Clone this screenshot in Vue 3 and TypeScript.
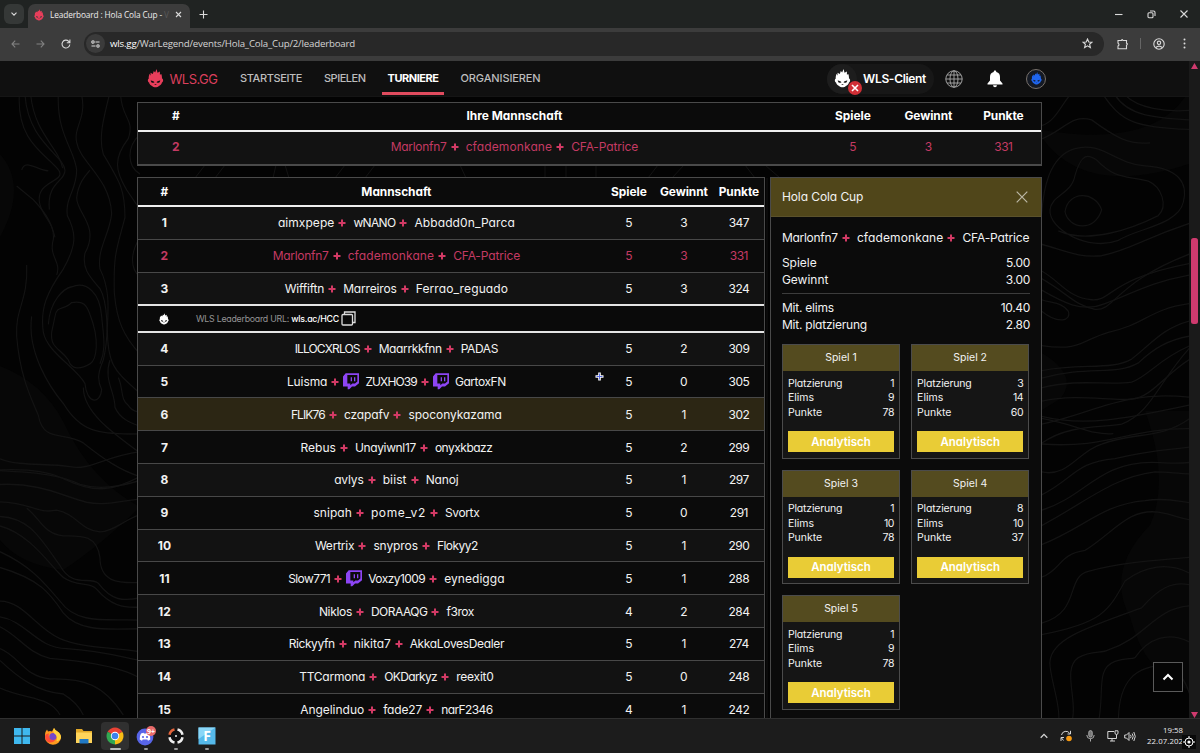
<script setup lang="ts">
import type { Directive } from 'vue'

interface Member { name: string; w: number; twitch?: boolean }
interface Row { rank: number; team: Member[]; games: number; wins: number; points: number; kind?: string }

// Tracks a label out (or in) so that it fills the given width.
const vFit: Directive<HTMLElement, number> = {
  mounted(el, { value }) {
    const natural = el.getBoundingClientRect().width
    const count = (el.textContent ?? '').trim().length
    if (count > 0) el.style.letterSpacing = `${(value - natural) / count}px`
  },
}

const m = (name: string, w: number, twitch = false): Member => ({ name, w, twitch })
const own: Member[] = [m('Marlonfn7', 56), m('cfademonkane', 86.5), m('CFA-Patrice', 67)]

const top: Row[] = [
  { rank: 1, team: [m('aimxpepe', 56.5), m('wNANO', 42), m('Abbadd0n_Parca', 100.5)], games: 5, wins: 3, points: 347, kind: 'light' },
  { rank: 2, team: own, games: 5, wins: 3, points: 331, kind: 'own' },
  { rank: 3, team: [m('Wiffiftn', 39.5), m('Marreiros', 53.5), m('Ferrao_reguado', 92.5)], games: 5, wins: 3, points: 324, kind: 'light' },
]
const rest: Row[] = [
  { rank: 4, team: [m('ILLOCXRLOS', 65), m('Maarrkkfnn', 63), m('PADAS', 37.5)], games: 5, wins: 2, points: 309, kind: 'light' },
  { rank: 5, team: [m('Luisma', 40.5), m('ZUXHO39', 51.5, true), m('GartoxFN', 51, true)], games: 5, wins: 0, points: 305 },
  { rank: 6, team: [m('FLIK76', 34), m('czapafv', 45.5), m('spoconykazama', 93.5)], games: 5, wins: 1, points: 302, kind: 'picked' },
  { rank: 7, team: [m('Rebus', 35.5), m('Unayiwnl17', 61), m('onyxkbazz', 57.5)], games: 5, wins: 2, points: 299 },
  { rank: 8, team: [m('avlys', 29.5), m('biist', 24), m('Nanoj', 33)], games: 5, wins: 1, points: 297, kind: 'light' },
  { rank: 9, team: [m('snipah', 38.5), m('pome_v2', 55), m('Svortx', 34.5)], games: 5, wins: 0, points: 291 },
  { rank: 10, team: [m('Wertrix', 39.5), m('snypros', 44.5), m('Flokyy2', 41)], games: 5, wins: 1, points: 290, kind: 'light' },
  { rank: 11, team: [m('Slow771', 42), m('Voxzy1009', 57, true), m('eynedigga', 60.5)], games: 5, wins: 1, points: 288 },
  { rank: 12, team: [m('Niklos', 33), m('DORAAQG', 56.5), m('f3rox', 27.5)], games: 4, wins: 2, points: 284, kind: 'light' },
  { rank: 13, team: [m('Rickyyfn', 46), m('nikita7', 37), m('AkkaLovesDealer', 94.5)], games: 5, wins: 1, points: 274 },
  { rank: 14, team: [m('TTCarmona', 66), m('OKDarkyz', 53), m('reexit0', 37.5)], games: 5, wins: 0, points: 248, kind: 'light' },
  { rank: 15, team: [m('Angelinduo', 64), m('fade27', 39), m('narF2346', 51.5)], games: 4, wins: 1, points: 242 },
]
const rounds = [
  { n: 1, place: 1, elims: 9, points: 78 },
  { n: 2, place: 3, elims: 14, points: 60 },
  { n: 3, place: 1, elims: 10, points: 78 },
  { n: 4, place: 8, elims: 10, points: 37 },
  { n: 5, place: 1, elims: 9, points: 78 },
]
const groups = [top, rest]

const leftLines = [
  'M58 0C50 120 140 150 176 190C200 220 110 215 118 270C125 310 165 320 160 365C145 410 185 420 170 455',
  'M75 0C85 120 190 150 195 190C195 220 140 220 148 290',
  'M92 0C105 100 175 130 188 185',
  'M175 0C170 100 225 140 230 190C230 240 195 260 202 305C230 350 230 380 190 440C140 500 120 540 130 600C140 650 230 690 255 730C260 780 300 785 305 745C290 720 295 700 310 670C330 600 320 520 300 490C270 460 245 440 255 400C300 330 230 300 230 260C235 220 260 200 270 190',
  'M245 0C260 60 220 80 230 120C240 170 330 210 335 300C330 350 290 390 300 440C330 490 325 540 322 590C322 690 350 700 420 755',
  'M328 0C310 60 295 110 310 150C360 220 375 240 375 310C350 390 340 400 343 500C350 570 370 610 420 655',
  'M362 0C365 60 405 60 385 110C340 160 345 190 380 240L420 290',
  'M165 560C170 530 195 545 215 525C250 520 260 530 270 555C300 620 290 670 270 680C240 695 215 695 205 670C180 640 150 640 155 600Z',
  'M145 580C150 520 190 490 215 485C260 470 300 500 305 560C310 610 320 640 300 680',
  'M95 560C80 650 150 740 190 780C240 850 290 860 420 857',
  'M250 740C250 800 330 850 420 905M330 670C310 720 345 750 345 790C360 820 395 830 420 838',
  'M80 430C85 520 45 540 50 610C60 710 90 760 115 810C130 880 190 850 250 880C310 920 360 950 420 965',
  'M50 230L100 265C150 310 155 330 165 360M65 190C75 160 110 190 145 192',
  'M0 920C60 940 140 930 210 940C270 950 310 915 420 902',
  'M0 948C80 945 140 950 190 970C290 1010 340 1000 420 965',
  'M0 985C120 980 190 1015 260 1030C320 1040 370 1025 420 1022',
  'M0 950C110 955 180 960 240 985C300 1000 360 990 420 975',
  'M0 1029C90 1030 110 1060 170 1050C230 1060 240 1100 300 1105C340 1105 380 1070 420 1062',
  'M0 1066C90 1070 120 1120 180 1190C220 1250 270 1215 295 1235C335 1280 370 1280 420 1272',
  'M0 1090C90 1110 150 1190 190 1220C230 1245 270 1230 290 1250C330 1290 370 1298 420 1295',
  'M80 1045C120 1070 130 1110 190 1115C240 1115 290 1110 300 1170C300 1230 350 1235 420 1233',
  'M0 1155C90 1190 130 1230 180 1280C230 1340 320 1325 420 1328',
  'M0 1195C120 1225 150 1260 190 1310C240 1360 330 1350 420 1350',
  'M0 1280C70 1280 110 1350 180 1375C250 1400 330 1395 420 1408',
  'M0 1345C60 1370 80 1410 150 1425C220 1430 350 1440 420 1475',
  'M0 1400C60 1420 70 1470 150 1477C250 1475 310 1490 370 1568',
  'M0 1320C80 1330 110 1400 200 1400C300 1405 360 1420 420 1430',
  'M0 1430C50 1470 110 1510 190 1515C220 1530 240 1550 250 1568M0 1500C80 1530 150 1520 180 1568',
  'M420 100C380 130 380 180 420 200M420 360C390 400 390 440 420 460M355 715C370 740 360 770 385 785C395 800 410 800 420 803',
]
const rightLines = [
  'M20 80C60 70 80 25 105 0M20 115C90 90 110 50 170 65C240 110 280 130 345 125',
  'M205 0C260 70 300 85 465 90M270 0C310 35 390 45 465 40M240 0C280 55 360 60 465 65',
  'M20 310C25 250 40 160 120 140C200 120 240 180 330 185C430 190 460 230 445 280C430 340 300 350 250 380C160 410 40 350 45 300C50 260 110 260 120 210C140 150 160 155 185 170C240 220 270 210 340 225C380 240 400 290 370 315C290 350 160 390 70 355',
  'M90 305C100 250 180 250 200 300C180 360 100 350 90 305Z',
  'M20 390C100 410 130 425 200 420C300 400 310 380 465 335',
  'M20 460C80 490 100 530 170 535C230 540 220 480 465 440',
  'M20 480C100 520 120 550 180 560C240 565 240 490 465 415',
  'M20 510C80 540 140 570 210 545C290 520 340 490 465 470',
  'M20 565C70 600 110 590 100 565C80 540 50 545 20 535',
  'M20 655C140 670 140 640 220 620C330 600 340 560 465 545',
  'M20 720C140 700 230 720 290 690C350 650 380 610 465 590',
  'M20 740C160 705 240 735 310 700C360 660 400 640 465 630',
  'M20 765C130 740 220 760 290 750C340 735 370 690 465 655',
  'M20 800C130 780 220 800 290 795C350 790 390 730 465 690',
  'M20 910C100 860 200 870 260 860C350 830 370 750 465 660',
  'M20 845C120 860 170 890 235 885M20 860C180 830 270 770 465 790',
  'M20 912C220 925 280 870 465 872M20 840C160 870 300 840 465 810',
  'M20 985C100 1000 130 930 200 912C300 880 380 900 465 845',
  'M20 1045C120 1000 120 960 240 950C340 930 370 930 465 920',
  'M20 1085C150 1050 190 960 350 960C390 960 420 965 465 960',
  'M20 1125C160 1060 230 1000 360 985C400 985 430 990 465 990',
  'M20 1175C150 1130 200 1070 330 1060C400 1050 440 1065 465 1065',
  'M20 1260C80 1240 70 1200 150 1190C240 1140 280 1080 370 1090C410 1095 430 1105 465 1110',
  'M20 1380C140 1350 90 1260 160 1245C260 1220 380 1215 465 1208',
  'M20 1410C200 1380 220 1350 270 1270C330 1230 400 1220 465 1250',
  'M70 1640C80 1600 40 1510 45 1480C50 1420 160 1390 320 1340C370 1290 410 1270 465 1280',
  'M110 1640C130 1580 80 1500 130 1470C170 1450 200 1460 220 1450C330 1420 360 1340 465 1335',
  'M190 1640C210 1560 180 1500 240 1480C270 1470 290 1475 300 1470C340 1420 400 1400 465 1430',
  'M250 1640C250 1530 300 1490 400 1490C440 1510 455 1540 465 1568',
]
</script>

<template>
  <div class="screen">
    <svg class="defs" width="0" height="0" aria-hidden="true">
      <symbol id="mascot" viewBox="0 0 24 28">
        <path fill-rule="evenodd" d="M5 10 4.600 5.500 8 7.500 9.500 3 11.500 5 13.500 0 15 5.500 18.500 3.500 18.500 8.500 20.500 7.500C22 11 21 12.500 22 14.500 24 15 23.500 19.500 21.500 20 21 22.500 19 24.500 16.500 25.500 15 27.500 9 27.500 7.500 25.500 5 24.500 3 22.500 2.500 20 .5 19.500 0 15 2 14.500 2 12 2 9 3.500 7ZM5 16.500C5 20 8 21.500 10.500 19.500 9.500 17.500 7 17.500 5 16.500ZM19 16.500C17 17.500 14.500 17.500 13.500 19.500 16 21.500 19 20 19 16.500ZM11 22.500 10.500 23.500H13.500L13 22.500Z" />
      </symbol>
      <symbol id="twitch" viewBox="0 0 24 24">
        <path fill="#8d45f5" d="M4 0H24V15L18 20H13.500L9 24.500H7V20H0V5ZM6.500 2.500V15.500H11V18L14 15.500H18L21.500 12.500V2.500ZM11.500 6H13.500V12H11.500ZM16.500 6H18.500V12H16.500Z" fill-rule="evenodd" />
      </symbol>
    </svg>

    <div class="tabs">
      <div class="tabmenu"><svg width="8" height="8" viewBox="0 0 8 8"><path d="M1.500 2.700 4 5.200 6.500 2.700" /></svg></div>
      <div class="tab">
        <svg class="pink" width="10" height="12"><use href="#mascot" /></svg>
        <span class="title"><span v-fit="112">Leaderboard : Hola Cola Cup -</span><i>V</i></span>
        <svg width="7" height="7" viewBox="0 0 7 7"><path d="M1 1 6 6M6 1 1 6" /></svg>
      </div>
      <svg class="plusbtn" width="9" height="9" viewBox="0 0 9 9"><path d="M4.500 .5V8.500M.5 4.500H8.500" /></svg>
      <div class="winbtns">
        <svg width="8" height="8" viewBox="0 0 8 8"><path d="M0 4.500H7.500" /></svg>
        <svg width="9" height="9" viewBox="0 0 9 9"><rect x="1" y="2.700" width="5" height="5" rx="1" /><path d="M3 1H6.500Q8 1 8 2.500V6" /></svg>
        <svg width="8" height="8" viewBox="0 0 8 8"><path d="M.5 .5 7.500 7.500M7.500 .5 .5 7.500" /></svg>
      </div>
    </div>

    <div class="toolbar">
      <svg class="dim" width="9" height="8" viewBox="0 0 9 8"><path d="M8.500 4H1M4.200 .7 1 4 4.200 7.300" /></svg>
      <svg class="dim" width="9" height="8" viewBox="0 0 9 8"><path d="M.5 4H8M4.800 .7 8 4 4.800 7.300" /></svg>
      <svg width="10" height="10" viewBox="0 0 10 10"><path d="M8.800 5.500A3.900 3.900 0 1 1 7.700 2.300L8.800 3.500M8.900 .6V3.700H5.800" /></svg>
      <div class="address">
        <div class="site"><svg width="9" height="8" viewBox="0 0 9 8"><circle cx="2" cy="2" r="1.200" /><path d="M4.500 2H8.500M.5 6H4.500" /><circle cx="7" cy="6" r="1.200" /></svg></div>
        <span v-fit="245"><b>wls.gg</b>/WarLegend/events/Hola_Cola_Cup/2/leaderboard</span>
        <svg class="star" width="11" height="11" viewBox="0 0 11 11"><path d="M5.500 1 6.800 4 10 4.200 7.600 6.300 8.400 9.600 5.500 7.800 2.600 9.600 3.400 6.300 1 4.200 4.200 4Z" /></svg>
      </div>
      <svg class="ext" width="12" height="12" viewBox="0 0 12 12"><path d="M1 2.500H4.500Q5 .8 6 2.500H9.500V5.200Q11.300 6 9.500 7.200V10.800H1V8Q3 7 1 5.200Z" /></svg>
      <i class="sep"></i>
      <svg width="12" height="12" viewBox="0 0 12 12"><circle cx="6" cy="6" r="5.200" /><circle cx="6" cy="4.800" r="1.700" /><path d="M2.800 9.500Q6 6.800 9.200 9.500" /></svg>
      <svg class="dots" width="3" height="11" viewBox="0 0 3 11"><circle cx="1.500" cy="1.500" r="1" /><circle cx="1.500" cy="5.500" r="1" /><circle cx="1.500" cy="9.500" r="1" /></svg>
    </div>

    <div class="page">
      <svg class="topo" width="1189" height="657" viewBox="0 61 1189 657">
        <path class="patch" d="M0 154Q28 186 0 237ZM0 366Q42 382 63 421Q90 480 140 507Q100 546 63 570Q20 565 0 540ZM1042 138Q1085 198 1189 164V97H1185Q1150 148 1042 130ZM1145 411Q1170 480 1150 525Q1105 571 1130 617Q1145 675 1189 690V411ZM1042 353Q1080 376 1060 399L1042 410Z" />
        <g transform="translate(0 95) scale(.3333 .3954)"><path v-for="d in leftLines" :key="d" :d="d" /></g>
        <g transform="translate(1035 95) scale(.3333 .3827)"><path v-for="d in rightLines" :key="d" :d="d" /></g>
        <path class="thin" d="M195 178 205 165M215 178 225 165M273 178 276 165M285 165 289 178M335 178 345 165M365 178 375 165M460 165 466 178M545 165V178M566 165V178M596 165V178M648 178 658 165M672 178 684 165M745 165 755 178M765 165 780 178M767 178V718" />
      </svg>

      <header>
        <svg class="pink brandmark" width="17" height="19"><use href="#mascot" /></svg>
        <span class="brand"><span v-fit="48">WLS.GG</span></span>
        <nav>
          <a class="n1"><span v-fit="62">STARTSEITE</span></a>
          <a class="n2"><span v-fit="41.5">SPIELEN</span></a>
          <a class="n3 active"><span v-fit="51">TURNIERE</span></a>
          <a class="n4"><span v-fit="80">ORGANISIEREN</span></a>
        </nav>
        <div class="client">
          <div class="face"><svg width="17" height="19"><use href="#mascot" /></svg>
            <svg class="badge" width="14" height="14" viewBox="0 0 14 14"><circle cx="7" cy="7" r="7" /><path d="M4 4 10 10M10 4 4 10" /></svg></div>
          <span v-fit="63">WLS-Client</span>
        </div>
        <svg class="globe" width="18" height="18" viewBox="0 0 18 18"><circle cx="9" cy="9" r="8.200" /><ellipse cx="9" cy="9" rx="4" ry="8.200" /><path d="M9 .8V17.200M.8 9H17.200M2 5H16M2 13H16" /></svg>
        <svg class="bell" width="16" height="18" viewBox="0 0 16 18"><path d="M8 .5C9 .5 9.300 1.200 9.300 2 12 2.600 13 4.700 13 7V10.500L15.500 13.500V14.500H.5V13.500L3 10.500V7C3 4.700 4 2.600 6.700 2 6.700 1.200 7 .5 8 .5ZM6 15.300H10Q9.800 17.300 8 17.300 6.200 17.300 6 15.300Z" /></svg>
        <div class="avatar"><svg width="11" height="13"><use href="#mascot" /></svg></div>
      </header>

      <main>
        <section class="mine">
          <div class="line head"><span>#</span><span v-fit="95">Ihre Mannschaft</span><span>Spiele</span><span>Gewinnt</span><span>Punkte</span></div>
          <div class="line light own">
            <b>2</b>
            <div class="team"><template v-for="(p, i) in own" :key="p.name"><svg v-if="i" class="plus" width="8" height="8" viewBox="0 0 8 8"><path d="M4 .5V7.500M.5 4H7.500" /></svg><span v-fit="p.w">{{ p.name }}</span></template></div>
            <span>5</span><span>3</span><span class="num">331</span>
          </div>
        </section>

        <div class="columns">
          <section class="board">
            <div class="line head"><span>#</span><span>Mannschaft</span><span>Spiele</span><span>Gewinnt</span><span>Punkte</span></div>
            <template v-for="(g, gi) in groups" :key="gi">
              <div v-if="gi" class="urlrow"><svg width="10" height="12"><use href="#mascot" /></svg><span v-fit="143" class="url">WLS Leaderboard URL: <b>wls.ac/HCC</b></span><svg class="copy" width="15" height="15" viewBox="0 0 15 15"><rect x="1" y="3.500" width="10.500" height="10.500" rx="1" /><path d="M3.500 3.500V1H14V11.500H11.500" /></svg></div>
              <div v-for="r in g" :key="r.rank" class="line" :class="r.kind">
                <b>{{ r.rank }}</b>
                <div class="team">
                  <template v-for="(p, i) in r.team" :key="p.name"><svg v-if="i" class="plus" width="8" height="8" viewBox="0 0 8 8"><path d="M4 .5V7.500M.5 4H7.500" /></svg><svg v-if="p.twitch" class="tw" width="16" height="16.500"><use href="#twitch" /></svg><span v-fit="p.w">{{ p.name }}</span></template>
                </div>
                <span>{{ r.games }}</span><span>{{ r.wins }}</span><span class="num">{{ r.points }}</span>
              </div>
            </template>
          </section>

          <aside>
            <div class="panelhead"><span v-fit="81.5">Hola Cola Cup</span><svg width="12" height="12" viewBox="0 0 12 12"><path d="M.7 .7 11.300 11.300M11.300 .7 .7 11.300" /></svg></div>
            <div class="panel">
              <div class="team"><template v-for="(p, i) in own" :key="p.name"><svg v-if="i" class="plus" width="8" height="8" viewBox="0 0 8 8"><path d="M4 .5V7.500M.5 4H7.500" /></svg><span v-fit="p.w">{{ p.name }}</span></template></div>
              <dl><dt>Spiele</dt><dd>5.00</dd><dt>Gewinnt</dt><dd>3.00</dd></dl>
              <dl class="avg"><dt><span v-fit="52">Mit. elims</span></dt><dd>10.40</dd><dt><span v-fit="85">Mit. platzierung</span></dt><dd>2.80</dd></dl>
              <div class="cards">
                <article v-for="c in rounds" :key="c.n">
                  <h3>Spiel {{ c.n }}</h3>
                  <dl><dt><span v-fit="54.5">Platzierung</span></dt><dd>{{ c.place }}</dd><dt>Elims</dt><dd>{{ c.elims }}</dd><dt>Punkte</dt><dd>{{ c.points }}</dd></dl>
                  <button><span v-fit="59.5">Analytisch</span></button>
                </article>
              </div>
            </div>
          </aside>
        </div>
      </main>

      <button class="totop"><svg width="12" height="8" viewBox="0 0 12 8"><path d="M1.500 6.500 6 2 10.500 6.500" /></svg></button>
      <svg class="scroll" width="11" height="657" viewBox="0 61 11 657"><path class="track" d="M0 61H11V718H0Z" /><path d="M2 69 5.500 63 9 69ZM2 712H9L5.500 718Z" /><rect x="2" y="238" width="7" height="86" rx="2.500" /></svg>
      <svg class="cursor" width="9" height="9" viewBox="0 0 9 9"><path d="M4.500 .5V8.500M.5 4.500H8.500" stroke="#fff" stroke-width="2.600" /><path d="M4.500 1.500V7.500M1.500 4.500H7.500" stroke="#4b5fe0" stroke-width=".9" /></svg>
    </div>

    <footer>
      <div class="apps">
        <div><svg width="18" height="18" viewBox="0 0 18 18"><path fill="#3fb8ef" d="M1 1H8.500V8.500H1ZM9.500 1H17V8.500H9.500ZM1 9.500H8.500V17H1ZM9.500 9.500H17V17H9.500Z" /></svg></div>
        <div><svg width="18" height="18" viewBox="0 0 18 18"><path fill="#ff9a1f" d="M1.500 5 3 2.500 4 4.500Q6 3.500 8 4.500L10 1Q11 3 13.500 4.500 17 7 17 10.500A8 7.500 0 0 1 1 10Q.8 7 1.500 5Z" /><path fill="#ff4b37" d="M1 9Q2 6 5 6.500 4 8 5 10 7 13 12 12.500 8 17 4 15 1 13 1 9Z" /><circle cx="9" cy="9.500" r="3.600" fill="#7548ca" /><path fill="#ffd33d" d="M10 1Q11 3 13.500 4.500 17.300 7 17 11 15 15 12.500 14 14 10 11 7 8 5 10 1Z" /></svg></div>
        <div><svg width="18" height="18" viewBox="0 0 18 18"><path fill="#e3a928" d="M1 2H7L8.500 4H17V8H1Z" /><path fill="#ffd45a" d="M1 5.500H17V16H1Z" /><path fill="#2179c4" d="M4.500 12H13.500V16.500H4.500Z" /></svg></div>
        <div class="on"><svg width="18" height="18" viewBox="0 0 18 18"><path fill="#e94235" d="M9 9 1.640 4.750A8.500 8.500 0 0 1 16.360 4.750Z" /><path fill="#f9bd15" d="M9 9 16.360 4.750A8.500 8.500 0 0 1 9 17.500Z" /><path fill="#32a852" d="M9 9V17.500A8.500 8.500 0 0 1 1.640 4.750Z" /><circle cx="9" cy="9" r="4.200" fill="#fff" /><circle cx="9" cy="9" r="3.300" fill="#3b82ee" /></svg><i class="wide"></i></div>
        <div><svg width="20" height="20" viewBox="0 0 20 20"><circle cx="9" cy="11" r="8.400" fill="#5865e8" /><path fill="#fff" d="M5 7.500 7.500 6.800 8 7.500H10L10.500 6.800 13 7.500Q14.500 10 14.300 13.500L12 14.700 11.300 13.600H6.700L6 14.700 3.700 13.500Q3.500 10 5 7.500Z" /><circle cx="7" cy="11" r="1.100" fill="#5865e8" /><circle cx="11" cy="11" r="1.100" fill="#5865e8" /><circle cx="15" cy="5" r="5" fill="#e86a6a" /><text x="15" y="7.500" text-anchor="middle" font-size="7" font-weight="700" fill="#fff">9+</text></svg><i></i></div>
        <div><svg width="18" height="18" viewBox="0 0 18 18"><circle cx="9" cy="9" r="7.500" fill="#111" /><g fill="none" stroke="#eee" stroke-width="2.500"><path d="M10.500 2.500A6.500 6.500 0 0 1 15.500 7.800M15.500 10.200A6.500 6.500 0 0 1 10.500 15.500M7.500 15.500A6.500 6.500 0 0 1 2.500 10.200" /><path stroke="#e2643b" d="M2.500 7.800A6.500 6.500 0 0 1 7.500 2.500" /></g><circle cx="9" cy="9" r="1" fill="#eee" /></svg><i></i></div>
        <div><svg width="18" height="18" viewBox="0 0 18 18"><path fill="#55b9ea" d="M.5 .5H17.500V17.500H.5Z" /><path fill="#8ad6f7" d="M.5 .5H17.500L.5 12Z" /><text x="9" y="14" text-anchor="middle" font-size="14" font-weight="700" fill="#fff">F</text></svg><i></i></div>
      </div>
      <div class="tray">
        <svg width="8" height="8" viewBox="0 0 8 8"><path d="M.7 5.700 4 2.400 7.300 5.700" stroke-width="1.300" /></svg>
        <svg class="t2" width="13" height="12" viewBox="0 0 13 12"><path d="M1.500 5A4.500 4.500 0 0 1 9.800 3.500M10.500 .8V4H7.500M1 11V7.500H4M1.500 8 3.500 10.500" /><circle cx="9" cy="8.500" r="2.800" fill="#f89a10" stroke="none" /></svg>
        <svg class="t3" width="9" height="12" viewBox="0 0 9 12"><rect x="2.800" y=".6" width="3.400" height="6.500" rx="1.700" fill="#777" /><path d="M.8 5Q.8 8.700 4.500 8.700 8.200 8.700 8.200 5M4.500 8.700V11.500" /></svg>
        <svg class="t4" width="12" height="12" viewBox="0 0 12 12"><path d="M7 1.500H.8V8.500H9.500V6M3 11H8M5 8.500V11M8 .8V3Q8 4.500 9.500 4.500 11 4.500 11 3V.8ZM9.500 4.500V7" /></svg>
        <svg class="t5" width="12" height="11" viewBox="0 0 12 11"><path d="M.7 4H2.500L5 1.500V9.500L2.500 7H.7ZM6.500 3.800Q7.700 5.500 6.500 7.200M8.200 2.500Q10.200 5.500 8.200 8.500M9.800 1Q12.700 5.500 9.800 10" /></svg>
        <div class="clock"><span v-fit="20">19:58</span><span v-fit="36">22.07.202</span></div>
        <svg class="rec" width="14" height="14" viewBox="0 0 14 14"><circle cx="7" cy="7" r="4" /><circle cx="7" cy="7" r="1.600" fill="#fff" stroke="none" /><path d="M7 1V3M7 11V13M1 7H3M11 7H13" /></svg>
      </div>
    </footer>
  </div>
</template>

<style>
body { background: #030303; overflow: hidden; }
</style>

<style scoped>
.screen { width: 1200px; height: 753px; overflow: hidden; display: flex; flex-direction: column; color: #f2f2f2; font-family: Inter, "Noto Sans", sans-serif; font-size: 12px; font-feature-settings: "cv11", "ss03"; }
.screen * { box-sizing: border-box; }
.defs { position: absolute; }
svg { display: block; flex: none; }
span { white-space: nowrap; }
.pink { fill: #e83e5b; }

.tabs { height: 28px; flex: none; background: #202322; display: flex; align-items: flex-start; padding: 4px 0 0 4px; font-family: "Open Sans", sans-serif; }
.tabs svg:not(.pink), .toolbar svg { fill: none; stroke: #dadada; stroke-width: 1.1; }
.tabmenu { width: 20px; height: 20px; border-radius: 6px; background: #353837; display: grid; place-items: center; }
.tab { margin-left: 4px; width: 162px; height: 24px; border-radius: 7px 7px 0 0; background: #3c3c3c; display: flex; align-items: center; padding: 0 8px 3px 6px; }
.title { flex: 1; margin-left: 6px; font-size: 8.300px; color: #ececec; line-height: 20px; }
.title i { color: #585858; font-style: normal; margin-left: 2px; }
.plusbtn { margin: 6px 0 0 9px; }
.winbtns { margin-left: auto; display: flex; align-items: center; gap: 24px; height: 20px; padding-right: 12px; }

.toolbar { height: 33px; flex: none; background: #3c3c3c; display: flex; align-items: center; padding: 0 14px 2px 11px; font-family: "Open Sans", sans-serif; }
.toolbar svg.dim { stroke: #818181; margin-right: 16px; }
.address { margin: 0 13px 0 13px; width: 220px; flex: 1; height: 24px; border-radius: 12px; background: #282828; display: flex; align-items: center; font-size: 9.700px; color: #d4d4d4; }
.address b { font-weight: 400; color: #fff; }
.site { width: 19px; height: 19px; border-radius: 50%; background: #3b3b3b; margin: 0 5px 0 2px; display: grid; place-items: center; }
.star { margin-left: auto; margin-right: 11.500px; }
.sep { width: 1px; height: 11px; background: #666; margin: 0 12px 0 11px; }
.toolbar svg.dots { fill: #ddd; stroke: none; margin-left: 18px; }

.page { flex: 1; min-height: 0; position: relative; overflow: hidden; background: #030303; }
.topo { position: absolute; left: 0; top: 0; fill: none; stroke: #131313; stroke-width: 3.4; }
.topo .patch { fill: #070707; stroke: none; }
.topo .thin { stroke-width: 1; }

header { position: relative; height: 36px; background: #101010; display: flex; align-items: center; padding: 0 0 0 146.500px; border-bottom: 1px solid #151515; }
.brand { width: 70.500px; margin-left: 6px; font-size: 13px; color: #dc3f5c; }
nav { display: flex; height: 36px; font-size: 11px; font-weight: 500; color: #bdbdbd; }
nav a { height: 34px; line-height: 35px; }
.n1 { width: 84px; } .n2 { width: 57.500px; } .n3 { width: 62px; padding-left: 6px; } .n4 { padding-left: 17px; }
.active { color: #fff; font-weight: 700; border-bottom: 3px solid #e04b5e; }
.client { position: relative; margin-left: auto; width: 107px; height: 30px; border-radius: 15px; background: #171717; display: flex; align-items: center; font-weight: 600; font-size: 12px; color: #fff; }
.face { position: relative; width: 30px; height: 30px; border-radius: 50%; background: #1d1d1d; display: grid; place-items: center; margin-right: 6px; fill: #fff; }
.badge { position: absolute; left: 21px; top: 17.500px; fill: #d02f36; stroke: #fff; stroke-width: 1.6; }
.badge circle { stroke: none; }
.globe { fill: none; stroke: #aaa; stroke-width: .9; margin-left: 11px; }
.bell { fill: #fff; margin-left: 24px; }
.avatar { width: 20px; height: 20px; border: 1px solid #77706a; border-radius: 50%; background: #151a24; fill: #1f66f0; display: grid; place-items: center; margin: 0 154px 0 23px; }

main { position: relative; width: 904.500px; margin: 4.500px 0 0 137.400px; }
.line { display: grid; align-items: center; justify-items: center; height: 32.800px; border-bottom: 1px solid #484848; background: #0b0b0b; font-size: 12px; }
.line b { font-weight: 700; font-size: 12px; }
.line.light { background: #121212; }
.line.own { color: #c43a63; }
.line.picked { background: #2c2614; }
.line.head { font-weight: 700; font-size: 11.900px; letter-spacing: -.05px; color: #fff; border-bottom: 2px solid #efefef; }
.num { letter-spacing: -.5px; }
.mine { border: 1px solid #4a4a4a; border-bottom-width: 2px; height: 64px; }
.mine .line { grid-template-columns: 75px 602px 75px 76px 74px; border-bottom: 0; height: 32px; }
.mine .line.head { height: 29px; border-bottom: 2px solid #efefef; padding-bottom: 1px; }
.mine .own { padding-bottom: 2px; }
.columns { display: flex; gap: 5px; margin-top: 11.500px; }
.board { flex: none; width: 627.500px; border: 1px solid #4a4a4a; height: 560px; }
.board .line { grid-template-columns: 52px 412px 53px 57px 1fr; }
.board .line > :last-child { margin-left: 1.500px; }
.board .line.head { height: 29px; }
.urlrow { height: 28.500px; border-top: 2px solid #e4e4e4; border-bottom: 2px solid #e4e4e4; background: #0a0a0a; display: flex; align-items: center; padding-left: 20.500px; fill: #fff; margin-top: -1px; }
.url { margin-left: 27px; font-size: 8.800px; color: #949494; }
.url b { color: #fff; font-weight: 500; }
.copy { fill: none; stroke: #ddd; stroke-width: 1.3; margin-left: 2px; }
.team { display: flex; align-items: center; }
.plus { fill: none; stroke: #d33a65; stroke-width: 2; margin: 1px 7px 0 4px; }
.plus:has(+ .tw) { margin-right: 4px; }
.tw { margin-right: 6px; }

aside { flex: 1; border: 1px solid #4a4a4a; height: 560px; background: #0b0b0b; font-size: 12px; }
.panelhead { height: 39px; background: #50461a; border-bottom: 1px solid #5b522b; display: flex; align-items: center; justify-content: space-between; padding: 0 13px 1px 11px; }
.panelhead svg { stroke: #bcb8a6; stroke-width: 1.2; }
.panel { padding: 12px 11px 0; }
.panel .team { height: 17px; margin-bottom: 8px; }
dl { margin: 0; display: grid; grid-template-columns: auto auto; line-height: 17px; }
dd { margin: 0; text-align: right; letter-spacing: -.35px; }
dl.avg { border-top: 1px solid #3c3c3c; margin-top: 5px; padding-top: 5px; }
.cards { display: grid; grid-template-columns: 118.200px 118.200px; gap: 11px; margin-top: 11px; }
article { height: 114.500px; border: 1px solid #4b4b4b; background: #151515; font-size: 10.500px; }
h3 { margin: 0; height: 26px; line-height: 25px; background: #544b1f; font-size: 10.500px; font-weight: 400; text-align: center; }
article dl { padding: 5.500px 5px 0; line-height: 14.700px; }
article button { display: block; width: 106px; height: 21px; margin: 10.500px auto 0; padding: 0; border: 0; background: #e9cc36; color: #fff; font: 600 11.500px Inter, sans-serif; font-feature-settings: "cv11"; }

.totop { position: absolute; left: 1153px; top: 601px; width: 30px; height: 30px; padding: 0; display: grid; place-items: center; background: #050505; border: 1px solid #5a5a5a; }
.totop svg { fill: none; stroke: #fff; stroke-width: 2; }
.scroll { position: absolute; right: 0; top: 0; fill: #cf3a6e; }
.scroll .track { fill: #1a1a1a; }
.cursor { position: absolute; left: 595px; top: 311px; }

footer { height: 35px; flex: none; background: #1c1c1c; border-top: 1px solid #303030; display: flex; justify-content: space-between; font-family: "Open Sans", sans-serif; }
.apps { display: flex; gap: 3px; padding: 3px 0 0 8.500px; }
.apps div { position: relative; width: 27.800px; height: 28px; display: grid; place-items: center; border-radius: 4px; }
.apps .on { background: #303030; }
.apps i { position: absolute; bottom: 0; left: 12px; width: 4px; height: 2px; border-radius: 1px; background: #999; }
.apps i.wide { left: 9px; width: 11px; background: #bbb; }
.tray { display: flex; align-items: center; padding-right: 4px; fill: none; stroke: #d5d5d5; stroke-width: 1; }
.t2 { margin-left: 12px; } .t3 { margin-left: 13px; stroke: #aaa; } .t4 { margin-left: 12px; } .t5 { margin-left: 4.500px; }
.clock { margin-left: 8.500px; width: 39px; display: flex; flex-direction: column; align-items: flex-end; font-size: 7.800px; line-height: 11px; stroke: none; color: #eee; }
.rec { margin: 11px 0 0 -1px; background: #090909; stroke: #fff; }
</style>
